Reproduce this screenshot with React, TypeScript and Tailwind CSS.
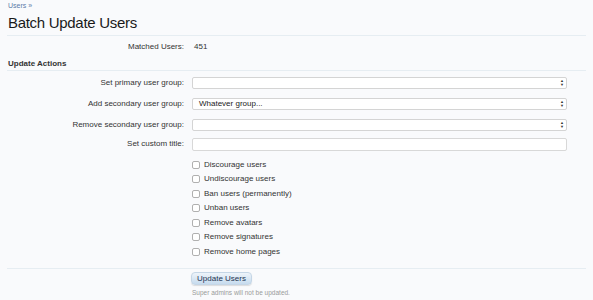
import React from 'react'

const ACTIONS = [
  'Discourage users',
  'Undiscourage users',
  'Ban users (permanently)',
  'Unban users',
  'Remove avatars',
  'Remove signatures',
  'Remove home pages',
]

function SelectBox({ value = '' }: { value?: string }) {
  return (
    <div className="flex h-[12px] items-center justify-between rounded-[2px] border border-[#d4d4d4] bg-white pl-[6px] pr-[2px] text-[8px] text-[#222]">
      <span>{value}</span>
      <span className="flex flex-col leading-none text-[#333]">
        <span className="text-[4px]">▲</span>
        <span className="text-[4px]">▼</span>
      </span>
    </div>
  )
}

function Row({ label, children }: { label: string; children: React.ReactNode }) {
  return (
    <div className="grid grid-cols-[177px_1fr] items-center gap-x-[8px]">
      <div className="text-right text-[8px] leading-[12px] text-[#333]">{label}</div>
      <div className="mr-[19px]">{children}</div>
    </div>
  )
}

export default function App() {
  return (
    <div
      className="h-[300px] w-[593px] overflow-hidden bg-[#f9fafc] px-[7px] pt-[1px]"
      style={{ fontFamily: '"Liberation Sans", Arial, sans-serif' }}
    >
      {/* Breadcrumb + title */}
      <div className="pl-[1px] text-[7px] leading-[10.5px] text-[#5b7ba8]">Users »</div>
      <h1 className="mt-[1px] pl-[1px] text-[15px] leading-[20px] tracking-[-0.3px] text-[#1a1a1a]">
        Batch Update Users
      </h1>
      <div className="mt-[2px] border-b border-[#e6edf2]" />

      <div className="mt-[5px] grid grid-cols-[177px_1fr] gap-x-[8px] text-[8px] leading-[12px] text-[#333]">
        <div className="text-right">Matched Users:</div>
        <div className="pl-[2px]">451</div>
      </div>

      {/* Update actions */}
      <div className="mt-[5px] pl-[1px] text-[8px] font-bold leading-[12px] text-[#333]">Update Actions</div>
      <div className="border-b border-[#e6edf2]" />

      <div className="mt-[6px] flex flex-col gap-y-[9px]">
        <Row label="Set primary user group:">
          <SelectBox />
        </Row>
        <Row label="Add secondary user group:">
          <SelectBox value="Whatever group..." />
        </Row>
        <Row label="Remove secondary user group:">
          <SelectBox />
        </Row>
        <div className="-mt-[2px]">
          <Row label="Set custom title:">
            <div className="h-[13px] rounded-[2px] border border-[#d8d8d8] bg-white" />
          </Row>
        </div>
      </div>

      <div className="mt-[9px] ml-[185px] flex flex-col gap-y-[4px]">
        {ACTIONS.map((a) => (
          <label key={a} className="flex h-[10.5px] items-center gap-[4px] text-[8px] text-[#333]">
            <span className="h-[8px] w-[8px] rounded-[2px] border border-[#b0b0b0] bg-white" />
            {a}
          </label>
        ))}
      </div>

      <div className="mt-[11px] border-b border-[#e6edf2]" />

      <div className="ml-[184px] mt-[3px] flex flex-col items-start">
        <button className="block h-[13px] w-[61px] rounded-[4px] border border-[#c5d6e6] bg-gradient-to-b from-[#eef4fa] to-[#c6dbee] text-[8px] leading-none text-[#1f3451] shadow-[0_1px_1px_rgba(0,0,0,0.12)]">
          Update Users
        </button>
        <div className="mt-[3px] pl-[1px] text-[6.5px] leading-[10px] text-[#9a9a9a]">Super admins will not be updated.</div>
      </div>
    </div>
  )
}
